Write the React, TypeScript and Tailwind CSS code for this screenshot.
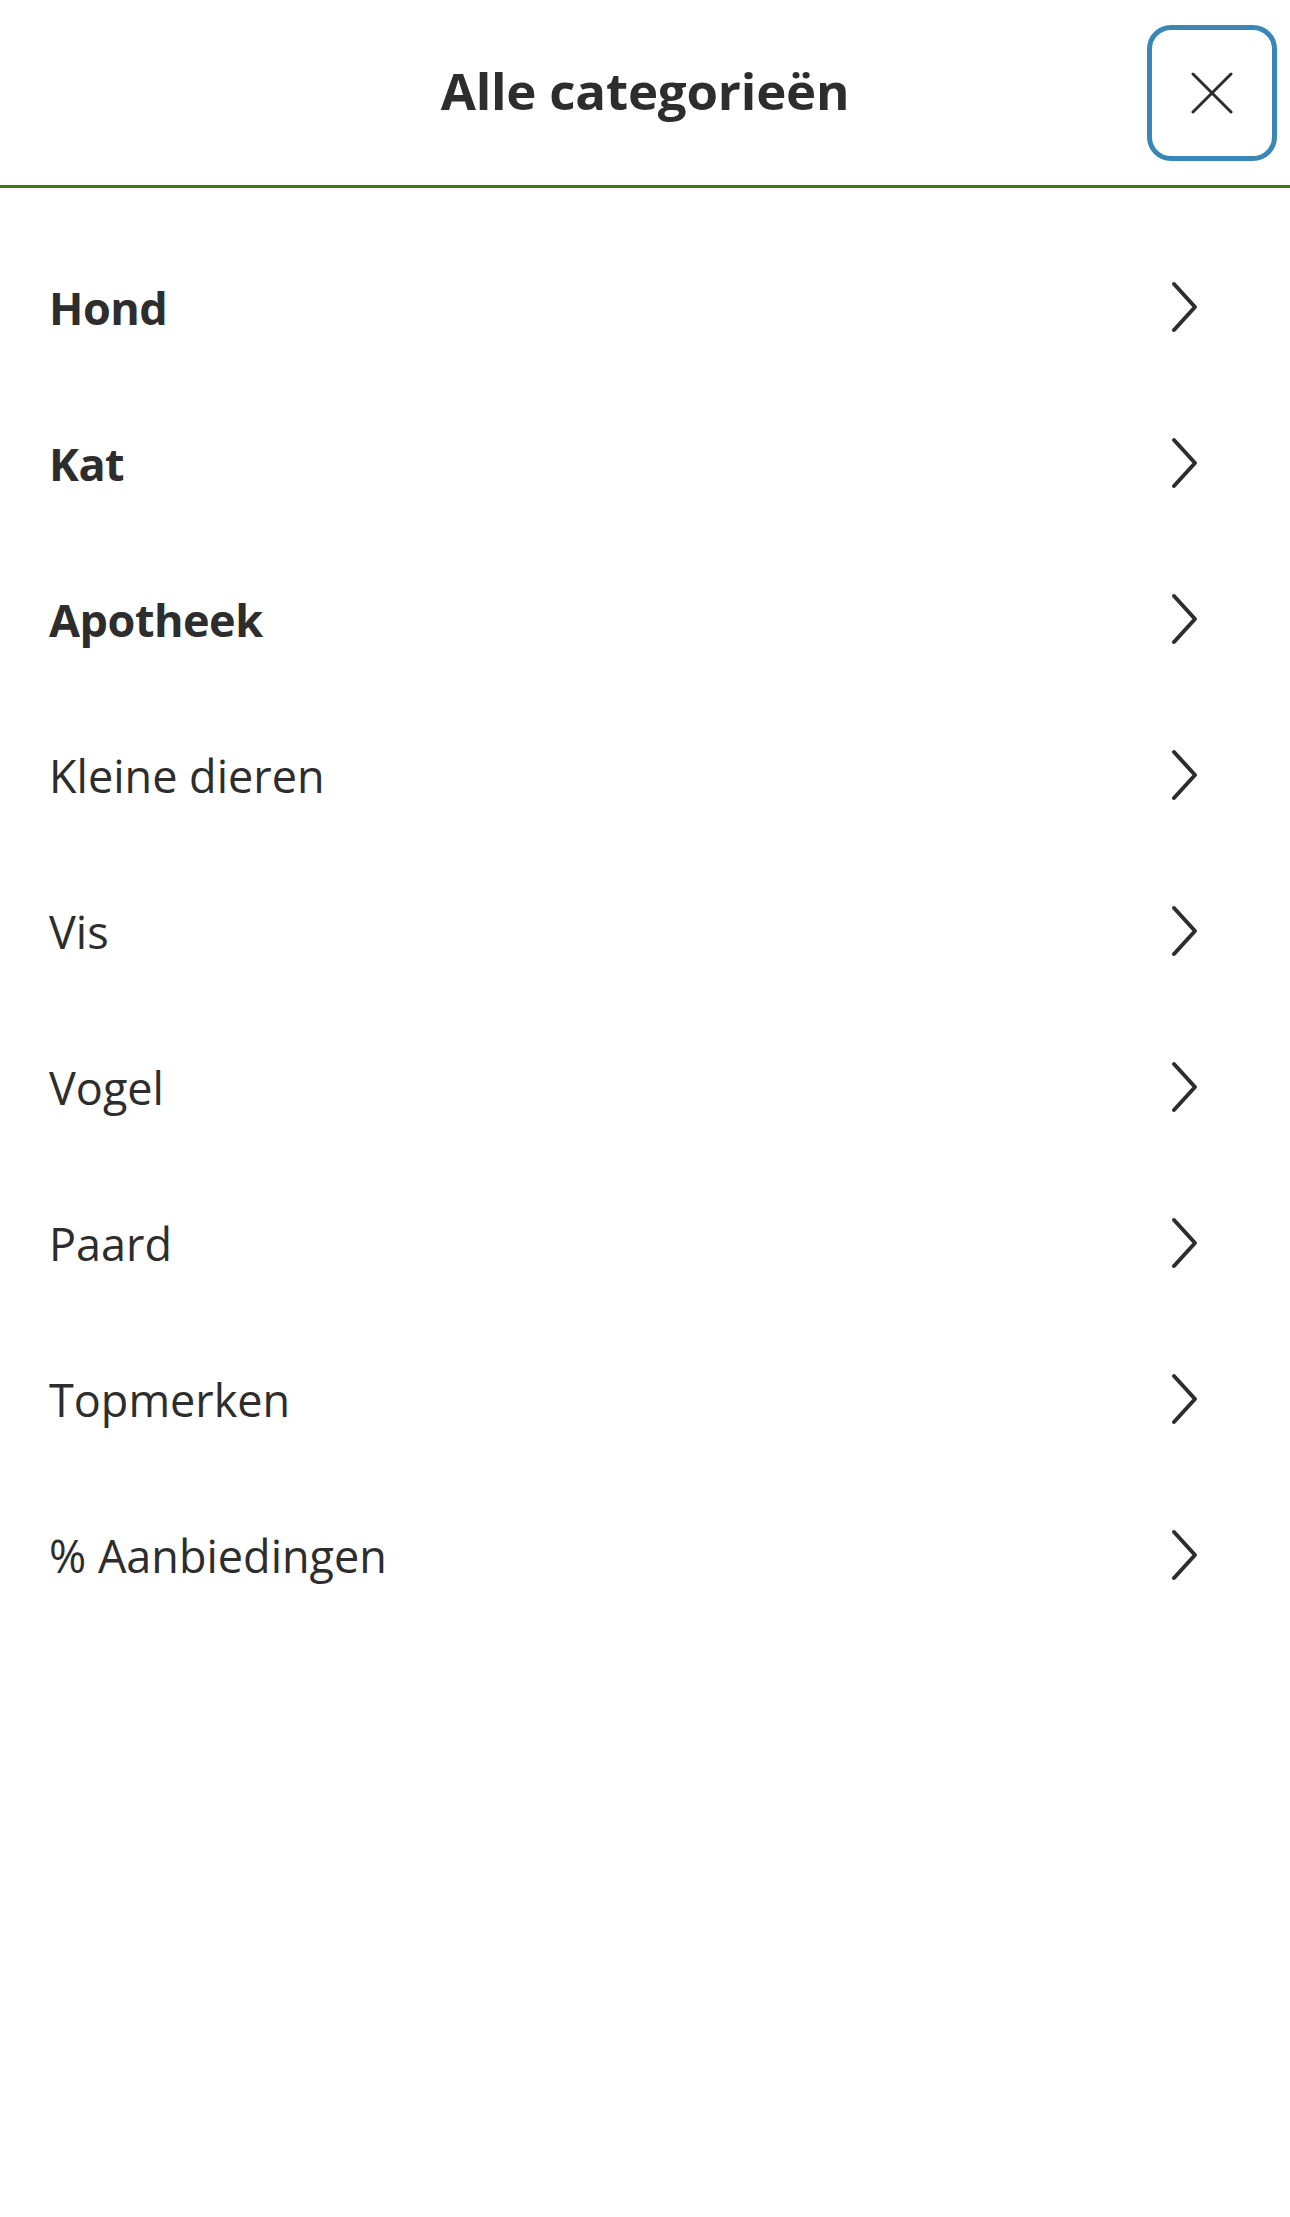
const categories: { label: string; bold?: boolean }[] = [
  { label: 'Hond', bold: true },
  { label: 'Kat', bold: true },
  { label: 'Apotheek', bold: true },
  { label: 'Kleine dieren' },
  { label: 'Vis' },
  { label: 'Vogel' },
  { label: 'Paard' },
  { label: 'Topmerken' },
  { label: '% Aanbiedingen' },
];

function Chevron() {
  return (
    <svg width="28" height="54" viewBox="0 0 28 54" fill="none" className="shrink-0">
      <polyline
        points="4,4 25,27 4,50"
        stroke="#2d2d2d"
        strokeWidth="4"
        strokeLinecap="round"
        strokeLinejoin="round"
      />
    </svg>
  );
}

export default function App() {
  return (
    <div className="min-h-[2217px] w-full bg-white text-[#2d2d2d] font-['Open_Sans',sans-serif]">
      <header className="grid h-[188px] grid-cols-[1fr_auto_1fr] items-center border-b-[3px] border-[#3b7a1c]">
        <div />
        <h1 className="text-[51px] font-bold tracking-[-0.2px] leading-none pb-[4px]">Alle categorieën</h1>
        <div className="flex justify-end pr-[13px]">
          <button
            type="button"
            aria-label="Sluiten"
            className="flex h-[136px] w-[130px] items-center justify-center rounded-[24px] border-[5px] border-[#3a86b4]"
          >
            <svg width="42" height="42" viewBox="0 0 42 42" fill="none">
              <path d="M2 2 L40 40 M40 2 L2 40" stroke="#2d2d2d" strokeWidth="3" strokeLinecap="round" />
            </svg>
          </button>
        </div>
      </header>

      <ul className="pt-[41px]">
        {categories.map((c) => (
          <li key={c.label} className="flex h-[156px] items-center justify-between pl-[49px] pr-[92px]">
            <span className={`text-[45px] leading-none ${c.bold ? 'font-bold tracking-[-0.5px]' : 'font-normal'}`}>
              {c.label}
            </span>
            <Chevron />
          </li>
        ))}
      </ul>
    </div>
  );
}
